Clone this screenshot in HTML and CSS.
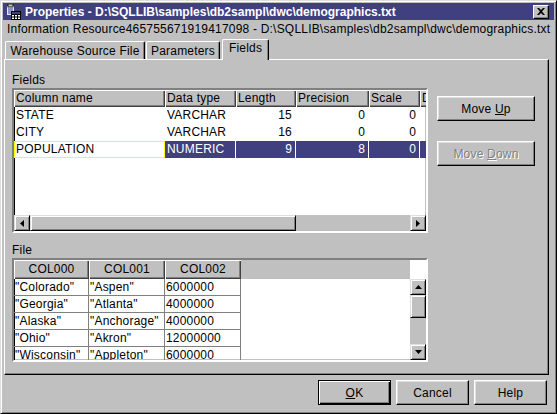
FILE: index.html
```html
<!DOCTYPE html>
<html lang="en">

<head>
    <meta charset="UTF-8">
    <title>Properties</title>
    <link rel="stylesheet" href="styles.css">
</head>

<body>
    <div class="window">
        <div class="titlebar">
            <svg class="app-icon" width="16" height="16" viewBox="0 0 16 16">
                <rect x="1.5" y="1.5" width="8" height="10" fill="#dfe8f0" stroke="#404080" />
                <rect x="3" y="0" width="5" height="3" fill="#c0c0c0" stroke="#000" stroke-width="0.8" />
                <path d="M3 5h5M3 7h5M3 9h3" stroke="#404080" />
                <rect x="6.5" y="7.5" width="9" height="8" fill="#fff" stroke="#000" />
                <path d="M6.5 10.5h9M6.5 13h9M9.5 7.5v8M12.5 7.5v8" stroke="#000" />
                <rect x="7" y="8" width="8" height="2" fill="#404080" />
            </svg>
            <span class="title">Properties - D:\SQLLIB\samples\db2sampl\dwc\demographics.txt</span>
            <div class="close-btn">
                <svg width="8" height="7" viewBox="0 0 8 7">
                    <path d="M0 0h2l2 2 2-2h2L5 3.5 8 7H6L4 5 2 7H0l3-3.5z" fill="#000" />
                </svg>
            </div>
        </div>

        <div class="info">Information Resource465755671919417098 - D:\SQLLIB\samples\db2sampl\dwc\demographics.txt</div>

        <div class="tabs">
            <div class="tab tab-source">Warehouse Source File</div>
            <div class="tab tab-params">Parameters</div>
            <div class="tab tab-fields active">Fields</div>
        </div>

        <div class="panel">
            <div class="panel-main">
                <div class="label">Fields</div>
                <div class="grid fields-grid">
                    <div class="grid-head">
                        <div class="hcell c-name">Column name</div>
                        <div class="hcell c-type">Data type</div>
                        <div class="hcell c-len">Length</div>
                        <div class="hcell c-prec">Precision</div>
                        <div class="hcell c-scale">Scale</div>
                        <div class="hcell c-desc">Description</div>
                    </div>
                    <div class="grid-row">
                        <div class="cell c-name">STATE</div>
                        <div class="cell c-type">VARCHAR</div>
                        <div class="cell c-len num">15</div>
                        <div class="cell c-prec num">0</div>
                        <div class="cell c-scale num">0</div>
                        <div class="cell c-desc"></div>
                    </div>
                    <div class="grid-row">
                        <div class="cell c-name">CITY</div>
                        <div class="cell c-type">VARCHAR</div>
                        <div class="cell c-len num">16</div>
                        <div class="cell c-prec num">0</div>
                        <div class="cell c-scale num">0</div>
                        <div class="cell c-desc"></div>
                    </div>
                    <div class="grid-row selected">
                        <div class="cell c-name focus">POPULATION</div>
                        <div class="cell c-type">NUMERIC</div>
                        <div class="cell c-len num">9</div>
                        <div class="cell c-prec num">8</div>
                        <div class="cell c-scale num">0</div>
                        <div class="cell c-desc"></div>
                    </div>
                    <div class="grid-fill"></div>
                    <div class="hscroll">
                        <div class="sb-btn">
                            <svg width="4" height="7" viewBox="0 0 4 7"><path d="M4 0v7L0 3.5z" fill="#000" /></svg>
                        </div>
                        <div class="sb-thumb h-thumb"></div>
                        <div class="sb-track"></div>
                        <div class="sb-btn">
                            <svg width="4" height="7" viewBox="0 0 4 7"><path d="M0 0v7l4-3.5z" fill="#000" /></svg>
                        </div>
                    </div>
                </div>

                <div class="label label-file">File</div>
                <div class="grid file-grid">
                    <div class="file-data">
                        <div class="grid-head file-head">
                            <div class="hcell fcol">COL000</div>
                            <div class="hcell fcol">COL001</div>
                            <div class="hcell fcol">COL002</div>
                        </div>
                        <div class="file-row">
                            <div class="fcell">"Colorado"</div>
                            <div class="fcell">"Aspen"</div>
                            <div class="fcell">6000000</div>
                        </div>
                        <div class="file-row">
                            <div class="fcell">"Georgia"</div>
                            <div class="fcell">"Atlanta"</div>
                            <div class="fcell">4000000</div>
                        </div>
                        <div class="file-row">
                            <div class="fcell">"Alaska"</div>
                            <div class="fcell">"Anchorage"</div>
                            <div class="fcell">4000000</div>
                        </div>
                        <div class="file-row">
                            <div class="fcell">"Ohio"</div>
                            <div class="fcell">"Akron"</div>
                            <div class="fcell">12000000</div>
                        </div>
                        <div class="file-row">
                            <div class="fcell">"Wisconsin"</div>
                            <div class="fcell">"Appleton"</div>
                            <div class="fcell">6000000</div>
                        </div>
                    </div>
                    <div class="vscroll">
                        <div class="vs-corner"></div>
                        <div class="sb-btn">
                            <svg width="7" height="4" viewBox="0 0 7 4"><path d="M0 4h7L3.5 0z" fill="#000" /></svg>
                        </div>
                        <div class="sb-thumb v-thumb"></div>
                        <div class="sb-track"></div>
                        <div class="sb-btn">
                            <svg width="7" height="4" viewBox="0 0 7 4"><path d="M0 0h7L3.5 4z" fill="#000" /></svg>
                        </div>
                    </div>
                </div>
            </div>

            <div class="panel-side">
                <div class="btn"><span>Move <u>U</u>p</span></div>
                <div class="btn disabled"><span>Move <u>D</u>own</span></div>
            </div>
        </div>

        <div class="footer">
            <div class="btn default"><span><u>O</u>K</span></div>
            <div class="btn"><span>Cancel</span></div>
            <div class="btn"><span>Help</span></div>
        </div>
    </div>
</body>

</html>
```

FILE: styles.css
```css
* {
    margin: 0;
    padding: 0;
    box-sizing: border-box;
}

body {
    font-family: 'Liberation Sans', Arial, sans-serif;
    font-size: 12px;
    letter-spacing: 0.2px;
    color: #000;
    background: #c0c0c0;
}

.window {
    width: 557px;
    height: 414px;
    background: #c0c0c0;
    border: 1px solid;
    border-color: #dfdfdf #000 #000 #dfdfdf;
    box-shadow: inset 1px 1px #fff, inset -1px -1px #808080;
    padding: 2px;
    display: flex;
    flex-direction: column;
}

/* title bar */
.titlebar {
    height: 17px;
    background: #404080;
    color: #fff;
    display: flex;
    align-items: center;
    padding-left: 2px;
    flex-shrink: 0;
}

.app-icon {
    margin-right: 4px;
    flex-shrink: 0;
}

.title {
    font-weight: bold;
    letter-spacing: 0;
    white-space: nowrap;
    flex: 1;
}

.close-btn {
    width: 16px;
    height: 14px;
    margin-right: 5px;
    background: #c0c0c0;
    border: 1px solid;
    border-color: #fff #000 #000 #fff;
    box-shadow: inset -1px -1px #808080;
    display: flex;
    align-items: center;
    justify-content: center;
}

.info {
    height: 18px;
    line-height: 18px;
    padding-left: 4px;
    white-space: nowrap;
    overflow: hidden;
    flex-shrink: 0;
}

/* tabs */
.tabs {
    height: 21px;
    display: flex;
    align-items: flex-end;
    padding-left: 2px;
    flex-shrink: 0;
}

.tab {
    height: 18px;
    line-height: 18px;
    text-align: center;
    white-space: nowrap;
    border-top: 1px solid #fff;
    border-left: 1px solid #fff;
    border-right: 1px solid #000;
    border-radius: 2px 2px 0 0;
    box-shadow: inset -1px 0 #808080;
}

.tab-source {
    width: 140px;
}

.tab-params {
    width: 74px;
    margin-left: 1px;
}

.tab-fields {
    width: 47px;
    margin-left: 2px;
}

.tab.active {
    height: 21px;
    line-height: 16px;
    margin-bottom: -1px;
    background: #c0c0c0;
    position: relative;
    z-index: 1;
}

.panel {
    height: 316px;
    margin: 0 5px 0 1px;
    border: 1px solid;
    border-color: #fff #000 #000 #fff;
    box-shadow: inset -1px -1px #808080;
    display: flex;
    flex-shrink: 0;
}

.panel-main {
    padding: 12px 0 0 7px;
    width: 423px;
}

.label {
    height: 16px;
    line-height: 16px;
}

.label-file {
    margin-top: 10px;
    height: 15px;
    line-height: 15px;
}

/* grids */
.grid {
    width: 416px;
    background: #fff;
    border: 2px solid;
    border-color: #808080 #fff #fff #808080;
    box-shadow: inset 1px 1px #000, inset -1px -1px #c0c0c0;
    overflow: hidden;
}

.fields-grid {
    height: 145px;
    display: flex;
    flex-direction: column;
}

.grid-head {
    display: flex;
    height: 17px;
    background: #c0c0c0;
    flex-shrink: 0;
}

.hcell {
    flex-shrink: 0;
    height: 100%;
    line-height: 17px;
    padding-left: 2px;
    white-space: nowrap;
    overflow: hidden;
    box-shadow: inset 1px 1px #fff, inset -1px -1px #404040, inset -2px -2px #808080;
}

.c-name {
    width: 151px;
}

.c-type {
    width: 71px;
}

.c-len {
    width: 60px;
}

.c-prec {
    width: 73px;
}

.c-scale {
    width: 51px;
}

.c-desc {
    width: 90px;
}

.grid-row {
    display: flex;
    height: 17px;
    line-height: 17px;
    flex-shrink: 0;
}

.cell {
    flex-shrink: 0;
    padding: 0 3px 0 2px;
    border-right: 1px solid #fff;
    white-space: nowrap;
    overflow: hidden;
}

.cell.num {
    text-align: right;
}

.grid-row.selected {
    background: #404080;
    color: #fff;
}

.cell.focus {
    background: #fff;
    color: #000;
    border: 1px solid #ffff00;
    line-height: 15px;
    padding-left: 1px;
}

.grid-fill {
    flex: 1;
}

/* scrollbars */
.hscroll {
    display: flex;
    height: 16px;
    flex-shrink: 0;
    background: #c0c0c0;
}

.sb-btn {
    width: 16px;
    height: 16px;
    flex-shrink: 0;
    background: #c0c0c0;
    border: 1px solid;
    border-color: #dfdfdf #000 #000 #dfdfdf;
    box-shadow: inset 1px 1px #fff, inset -1px -1px #808080;
    display: flex;
    align-items: center;
    justify-content: center;
}

.sb-thumb {
    flex-shrink: 0;
    background: #c0c0c0;
    border: 1px solid;
    border-color: #dfdfdf #000 #000 #dfdfdf;
    box-shadow: inset 1px 1px #fff, inset -1px -1px #808080;
}

.h-thumb {
    width: 266px;
}

.v-thumb {
    height: 23px;
}

.sb-track {
    flex: 1;
    background: #c0c0c0;
}

.file-grid {
    height: 104px;
    display: flex;
}

.file-data {
    width: 396px;
}

.file-head {
    height: 19px;
}

.file-head .hcell {
    line-height: 19px;
    padding-left: 0;
    text-align: center;
}

.fcol {
    width: 76px;
}

.fcol:first-child {
    width: 75px;
}

.file-row {
    display: flex;
    height: 17px;
    line-height: 16px;
}

.fcell {
    width: 76px;
    flex-shrink: 0;
    padding-left: 1px;
    border-right: 1px solid #808080;
    border-bottom: 1px solid #808080;
    white-space: nowrap;
    overflow: hidden;
}

.fcell:first-child {
    width: 75px;
}

.vscroll {
    width: 16px;
    display: flex;
    flex-direction: column;
}

.vs-corner {
    height: 19px;
    flex-shrink: 0;
    background: #fff;
}

/* buttons */
.panel-side {
    padding: 36px 0 0 9px;
    display: flex;
    flex-direction: column;
    gap: 20px;
}

.btn {
    width: 98px;
    height: 25px;
    display: flex;
    align-items: center;
    justify-content: center;
    background: #c0c0c0;
    border: 1px solid;
    border-color: #fff #000 #000 #fff;
    box-shadow: inset -1px -1px #808080, inset 1px 1px #dfdfdf;
    white-space: nowrap;
}

.btn.disabled {
    color: #808080;
    text-shadow: 1px 1px 0 #fff;
}

.footer {
    display: flex;
    justify-content: flex-end;
    gap: 5px;
    padding: 5px 7px 0 0;
}

.footer .btn {
    width: 73px;
}

.btn.default {
    border-color: #000;
    box-shadow: inset 1px 1px #fff, inset -1px -1px #000, inset -2px -2px #808080;
}
```
